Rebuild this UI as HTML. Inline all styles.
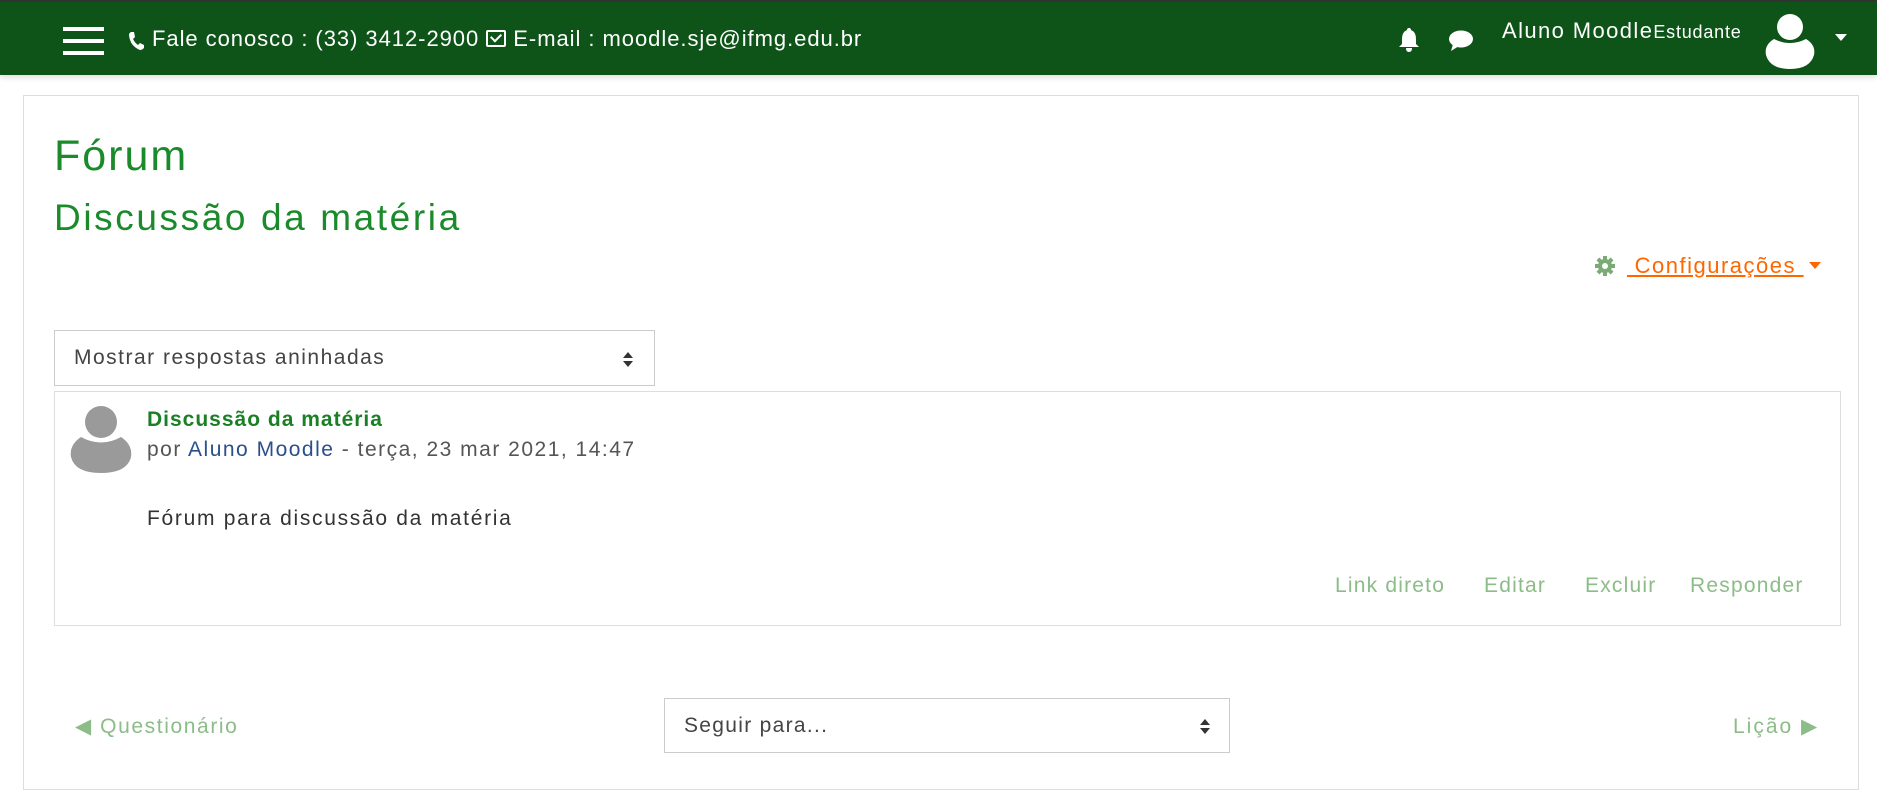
<!DOCTYPE html>
<html><head><meta charset="utf-8"><style>
*{margin:0;padding:0;box-sizing:border-box}
body{width:1877px;height:799px;background:#fff;font-family:"Liberation Sans",sans-serif;position:relative;overflow:hidden;color:#333}
.a{position:absolute;white-space:nowrap}
#nav{position:absolute;left:0;top:0;width:1877px;height:75px;background:#0e5419;border-top:2px solid #333;box-shadow:0 2px 6px rgba(0,0,0,.15)}
.hb{position:absolute;left:63px;width:41px;height:4px;background:#fff}
#card{position:absolute;left:23px;top:95px;width:1836px;height:695px;border:1px solid #ddd}
.box{position:absolute;border:1px solid #ccc;background:#fff}
.green{color:#1b8a2a}
.lg{color:#8cbc88;letter-spacing:1.2px}
</style></head><body>
<div id="nav">
 <div class="hb" style="top:25px"></div><div class="hb" style="top:37px"></div><div class="hb" style="top:49px"></div>
 <svg class="a" style="left:127px;top:29px" width="18" height="20" viewBox="0 0 18 20"><path d="M4 1 L7 1 L8 6 L6 8 Q8 12 11 14 L13 12 L17 14 L17 17 Q15 19 13 19 Q3 15 2 4 Q2 2 4 1Z" fill="#fff"/></svg>
 <div class="a" style="left:152px;top:24px;font-size:22px;color:#fff;letter-spacing:0.95px">Fale conosco : (33) 3412-2900 <span style="display:inline-block;width:20px;height:17px;border:2px solid #fff;border-radius:2px;vertical-align:-1px;position:relative"><span style="position:absolute;left:3px;top:1px;width:10px;height:7px;border-left:2px solid #fff;border-bottom:2px solid #fff;transform:rotate(-45deg)"></span></span> E-mail : moodle.sje@ifmg.edu.br</div>
 <svg class="a" style="left:1398px;top:25px" width="22" height="26" viewBox="0 0 22 26"><path d="M11 1 Q13 1 13 3 Q18 5 18 12 L18 17 L21 20 L1 20 L4 17 L4 12 Q4 5 9 3 Q9 1 11 1Z M8 21 L14 21 Q14 25 11 25 Q8 25 8 21Z" fill="#fff"/></svg>
 <svg class="a" style="left:1448px;top:27px" width="26" height="24" viewBox="0 0 26 24"><ellipse cx="13" cy="10" rx="12" ry="8.5" fill="#fff"/><path d="M5 15 L3 22 L11 17Z" fill="#fff"/></svg>
 <div class="a" style="left:1502px;top:16px;font-size:22px;color:#fff;letter-spacing:1.4px">Aluno Moodle<span style="font-size:18px;letter-spacing:0.8px">Estudante</span></div>
 <svg class="a" style="left:1764px;top:11px" width="52" height="56" viewBox="0 0 52 56"><circle cx="26" cy="14" r="13" fill="#fff"/><path d="M10 26 Q26 34 42 26 Q52 32 50 42 Q46 56 26 56 Q6 56 2 42 Q0 32 10 26Z" fill="#fff"/></svg>
 <div class="a" style="left:1835px;top:32px;width:0;height:0;border-left:6px solid transparent;border-right:6px solid transparent;border-top:7px solid #fff"></div>
</div>
<div id="card"></div>
<div class="a green" style="left:54px;top:132px;font-size:43px;letter-spacing:2px">Fórum</div>
<div class="a green" style="left:54px;top:197px;font-size:37px;letter-spacing:2.6px">Discussão da matéria</div>
<svg class="a" style="left:1595px;top:256px" width="20" height="20" viewBox="0 0 20 20"><g fill="#7aab75"><circle cx="10" cy="10" r="7"/><rect x="8" y="0" width="4" height="20"/><rect x="0" y="8" width="20" height="4"/><rect x="8" y="0" width="4" height="20" transform="rotate(45 10 10)"/><rect x="8" y="0" width="4" height="20" transform="rotate(-45 10 10)"/></g><circle cx="10" cy="10" r="3" fill="#fff"/></svg>
<div class="a" style="left:1627px;top:253px;font-size:22px;color:#f60;text-decoration:underline;letter-spacing:1.5px">&nbsp;Configurações&nbsp;</div>
<div class="a" style="left:1809px;top:262px;width:0;height:0;border-left:6px solid transparent;border-right:6px solid transparent;border-top:7px solid #f60"></div>
<div class="box" style="left:54px;top:330px;width:601px;height:56px"></div>
<div class="a" style="left:74px;top:346px;font-size:21px;color:#444;letter-spacing:1.5px">Mostrar respostas aninhadas</div>
<div class="a" style="left:623px;top:352px;width:0;height:0;border-left:5px solid transparent;border-right:5px solid transparent;border-bottom:6px solid #333"></div>
<div class="a" style="left:623px;top:361px;width:0;height:0;border-left:5px solid transparent;border-right:5px solid transparent;border-top:6px solid #333"></div>
<div class="box" style="left:54px;top:391px;width:1787px;height:235px;border-color:#ddd"></div>
<svg class="a" style="left:69px;top:405px" width="64" height="68" viewBox="0 0 64 68"><circle cx="32" cy="17" r="16" fill="#9a9a9a"/><path d="M12 32 Q32 43 52 32 Q64 40 62 52 Q58 68 32 68 Q6 68 2 52 Q0 40 12 32Z" fill="#9a9a9a"/></svg>
<div class="a green" style="left:147px;top:408px;font-size:21px;font-weight:bold;color:#1b7f26;letter-spacing:1px">Discussão da matéria</div>
<div class="a" style="left:147px;top:438px;font-size:21px;color:#555;letter-spacing:1.5px">por <span style="color:#2a4f8a">Aluno Moodle</span> - terça, 23 mar 2021, 14:47</div>
<div class="a" style="left:147px;top:507px;font-size:21px;color:#333;letter-spacing:1.7px">Fórum para discussão da matéria</div>
<div class="a lg" style="left:1335px;top:574px;font-size:21px">Link direto</div>
<div class="a lg" style="left:1484px;top:574px;font-size:21px">Editar</div>
<div class="a lg" style="left:1585px;top:574px;font-size:21px">Excluir</div>
<div class="a lg" style="left:1690px;top:574px;font-size:21px">Responder</div>
<div class="a lg" style="left:75px;top:714px;font-size:21px;letter-spacing:1.6px">◀ Questionário</div>
<div class="box" style="left:664px;top:698px;width:566px;height:55px"></div>
<div class="a" style="left:684px;top:714px;font-size:21px;color:#444;letter-spacing:1.3px">Seguir para...</div>
<div class="a" style="left:1200px;top:719px;width:0;height:0;border-left:5px solid transparent;border-right:5px solid transparent;border-bottom:6px solid #333"></div>
<div class="a" style="left:1200px;top:728px;width:0;height:0;border-left:5px solid transparent;border-right:5px solid transparent;border-top:6px solid #333"></div>
<div class="a lg" style="left:1733px;top:714px;font-size:21px;letter-spacing:2px">Lição ▶</div>
</body></html>
